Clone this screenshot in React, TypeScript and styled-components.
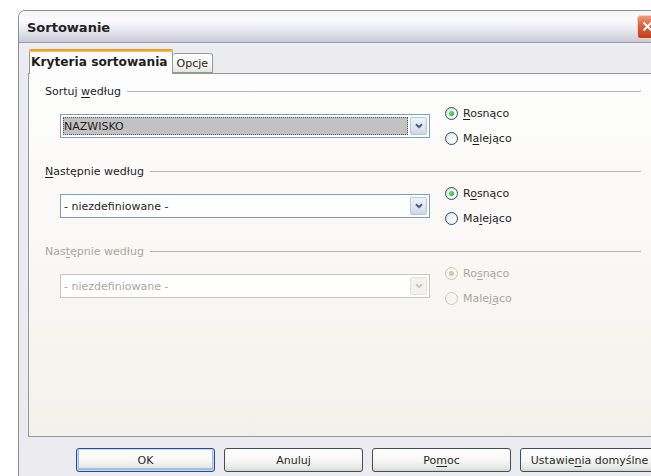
import styled, { createGlobalStyle } from 'styled-components'

const GlobalStyle = createGlobalStyle`
  html, body {
    margin: 0;
    background: #fff;
    overflow: hidden;
  }
  body {
    font-family: "DejaVu Sans", Tahoma, sans-serif;
    font-size: 11px;
    color: #1e1e1e;
  }
`

interface IRadio {
  label: string
  hotkey: number
  checked?: boolean
}
interface IGroup {
  title: string
  hotkey: number
  value: string
  focused?: boolean
  disabled?: boolean
  radios: IRadio[]
}

const groups: IGroup[] = [
  {
    title: 'Sortuj według',
    hotkey: 7,
    value: 'NAZWISKO',
    focused: true,
    radios: [
      { label: 'Rosnąco', hotkey: 0, checked: true },
      { label: 'Malejąco', hotkey: 1 },
    ],
  },
  {
    title: 'Następnie według',
    hotkey: 0,
    value: '- niezdefiniowane -',
    radios: [
      { label: 'Rosnąco', hotkey: 1, checked: true },
      { label: 'Malejąco', hotkey: 2 },
    ],
  },
  {
    title: 'Następnie według',
    hotkey: 3,
    value: '- niezdefiniowane -',
    disabled: true,
    radios: [
      { label: 'Rosnąco', hotkey: 2, checked: true },
      { label: 'Malejąco', hotkey: 5 },
    ],
  },
]

const buttons = [
  { label: 'OK', hotkey: -1, primary: true },
  { label: 'Anuluj', hotkey: -1 },
  { label: 'Pomoc', hotkey: 2 },
  { label: 'Ustawienia domyślne', hotkey: 7 },
]

const Page = styled.div`
  width: 651px;
  height: 476px;
  padding: 10px 0 0 18px;
  box-sizing: border-box;
`

const Window = styled.div`
  width: 642px;
  height: 466px;
  border: 1px solid #8e8e98;
  border-right: none;
  border-bottom: none;
  border-top-left-radius: 7px;
  background: #ecebef;
  display: flex;
  flex-direction: column;
  overflow: hidden;
`

const TitleBar = styled.div`
  height: 31px;
  flex: none;
  display: flex;
  align-items: center;
  padding-left: 8px;
  border-bottom: 1px solid #9c9ca8;
  background: linear-gradient(180deg, #f4f4f8 0%, #fbfbfd 30%, #e6e6ee 65%, #cacad6 100%);
`

const Title = styled.span`
  font-size: 13px;
  font-weight: bold;
  color: #222;
  padding-top: 2px;
`

const CloseButton = styled.div`
  margin-left: auto;
  margin-right: 3px;
  width: 21px;
  height: 24px;
  box-sizing: border-box;
  border: 1px solid #f4d0c4;
  border-radius: 3px;
  background: linear-gradient(180deg, #ec9a7e 0%, #d8603c 45%, #c2401c 100%);
  display: flex;
  align-items: center;
  justify-content: center;
`

const TabStrip = styled.div`
  height: 30px;
  flex: none;
  display: flex;
  align-items: flex-end;
  padding-left: 10px;
`

const Tab = styled.div<{ $active?: boolean }>`
  box-sizing: border-box;
  position: relative;
  z-index: ${(p) => (p.$active ? 2 : 1)};
  height: ${(p) => (p.$active ? '25px' : '20px')};
  margin-bottom: ${(p) => (p.$active ? '-1px' : '0')};
  padding: ${(p) => (p.$active ? '5px 4px 0 1px' : '3px 4px 0')};
  border: 1px solid #919b9c;
  border-bottom: ${(p) => (p.$active ? 'none' : '1px solid #919b9c')};
  border-left: ${(p) => (p.$active ? '1px solid #919b9c' : 'none')};
  border-radius: 3px 3px 0 0;
  background: ${(p) =>
    p.$active ? '#fcfcfe' : 'linear-gradient(180deg, #fefefe 0%, #f2f2ee 70%, #e4e3dc 100%)'};
  font-weight: ${(p) => (p.$active ? 'bold' : 'normal')};
  font-size: ${(p) => (p.$active ? '12.2px' : '11px')};
  white-space: nowrap;
  &::before {
    content: '';
    display: ${(p) => (p.$active ? 'block' : 'none')};
    position: absolute;
    left: -1px;
    right: -1px;
    top: -1px;
    height: 3px;
    border-radius: 3px 3px 0 0;
    background: linear-gradient(180deg, #e68b2c 0%, #ffc73c 100%);
  }
`

const Panel = styled.div`
  height: 364px;
  flex: none;
  box-sizing: border-box;
  margin-left: 9px;
  padding: 9px 20px 0 16px;
  border: 1px solid #919b9c;
  border-right: none;
  background: linear-gradient(180deg, #fdfdfd 0%, #f9f8f5 50%, #f3f1ea 100%);
  display: flex;
  flex-direction: column;
`

const Group = styled.div`
  height: 80px;
  flex: none;
`

const GroupHeader = styled.div<{ $disabled?: boolean }>`
  height: 16px;
  display: flex;
  align-items: center;
  gap: 6px;
  color: ${(p) => (p.$disabled ? '#a8a7a2' : 'inherit')};
`

const Rule = styled.div`
  flex: 1;
  height: 1px;
  background: #b4b4b4;
`

const GroupBody = styled.div`
  display: flex;
`

const Combo = styled.div<{ $disabled?: boolean }>`
  margin: 15px 0 0 15px;
  width: 370px;
  height: 24px;
  box-sizing: border-box;
  border: 1px solid ${(p) => (p.$disabled ? '#c9c7ba' : '#7f9db9')};
  background: #fff;
  display: flex;
  align-items: center;
  padding: 2px;
  gap: 2px;
  color: ${(p) => (p.$disabled ? '#a8a7a2' : 'inherit')};
`

const ComboValue = styled.div<{ $focused?: boolean }>`
  flex: 1;
  height: 100%;
  box-sizing: border-box;
  display: flex;
  align-items: center;
  padding-left: 1px;
  background: ${(p) => (p.$focused ? '#c2c2c2' : 'transparent')};
  outline: ${(p) => (p.$focused ? '1px dotted #555' : 'none')};
  outline-offset: -1px;
`

const ComboArrow = styled.div<{ $disabled?: boolean }>`
  width: 17px;
  height: 18px;
  box-sizing: border-box;
  border: 1px solid ${(p) => (p.$disabled ? '#e2e0d8' : '#b9c6e0')};
  border-radius: 2px;
  background: ${(p) =>
    p.$disabled
      ? '#f3f2ee'
      : 'linear-gradient(180deg, #f0f2f8 0%, #dfe4ee 60%, #cfd6e4 100%)'};
  display: flex;
  align-items: center;
  justify-content: center;
`

const RadioColumn = styled.div`
  margin: 2px 0 0 15px;
  display: flex;
  flex-direction: column;
  gap: 1px;
`

const RadioRow = styled.div<{ $disabled?: boolean }>`
  height: 24px;
  display: flex;
  align-items: center;
  gap: 5px;
  color: ${(p) => (p.$disabled ? '#a8a7a2' : 'inherit')};
`

const RadioCircle = styled.span<{ $checked?: boolean; $disabled?: boolean }>`
  width: 13px;
  height: 13px;
  box-sizing: border-box;
  border-radius: 50%;
  border: 1px solid ${(p) => (p.$disabled ? '#cac8bb' : '#1c5180')};
  background: ${(p) =>
    p.$disabled ? '#f6f5f2' : 'radial-gradient(circle at 65% 65%, #fff 0%, #f2f2ee 50%, #d6d5cd 100%)'};
  display: flex;
  align-items: center;
  justify-content: center;
  &::after {
    content: '';
    display: ${(p) => (p.$checked ? 'block' : 'none')};
    width: 5px;
    height: 5px;
    border-radius: 50%;
    background: ${(p) =>
      p.$disabled ? '#cac8bb' : 'radial-gradient(circle at 35% 35%, #7ee17a 0%, #3fb43c 60%, #21a121 100%)'};
  }
`

const Key = styled.span`
  text-decoration: underline;
  text-underline-offset: 2px;
`

const ButtonRow = styled.div`
  display: flex;
  gap: 9px;
  margin-top: 11px;
  padding-left: 57px;
`

const Button = styled.div<{ $primary?: boolean }>`
  flex: none;
  width: 139px;
  height: 24px;
  box-sizing: border-box;
  border: 1px solid ${(p) => (p.$primary ? '#1f4f8f' : '#3a4f66')};
  border-radius: 3px;
  background: linear-gradient(180deg, #ffffff 0%, #f6f6f4 55%, #e6e5e0 88%, #d6d3ca 100%);
  box-shadow: ${(p) =>
    p.$primary ? 'inset 0 0 0 1px #c7d6f4, inset 0 -1px 0 2px #a3bde8' : 'none'};
  display: flex;
  align-items: center;
  justify-content: center;
  white-space: nowrap;
  font-weight: normal;
  color: #2a2a2a;
`

const Hotkeyed = ({ text, hotkey }: { text: string; hotkey: number }) => {
  if (hotkey < 0) return <>{text}</>
  return (
    <>
      {text.slice(0, hotkey)}
      <Key>{text[hotkey]}</Key>
      {text.slice(hotkey + 1)}
    </>
  )
}

const Chevron = ({ color }: { color: string }) => (
  <svg width="8" height="6" viewBox="0 0 8 6">
    <path d="M1 1.2 L4 4.2 L7 1.2" fill="none" stroke={color} strokeWidth="2" />
  </svg>
)

const SortGroup = ({ title, hotkey, value, focused, disabled, radios }: IGroup) => (
  <Group>
    <GroupHeader $disabled={disabled}>
      <span>
        <Hotkeyed text={title} hotkey={hotkey} />
      </span>
      <Rule />
    </GroupHeader>
    <GroupBody>
      <Combo $disabled={disabled}>
        <ComboValue $focused={focused}>{value}</ComboValue>
        <ComboArrow $disabled={disabled}>
          <Chevron color={disabled ? '#c8c6bc' : '#4b5d7e'} />
        </ComboArrow>
      </Combo>
      <RadioColumn>
        {radios.map((r) => (
          <RadioRow key={r.label} $disabled={disabled}>
            <RadioCircle $checked={r.checked} $disabled={disabled} />
            <span>
              <Hotkeyed text={r.label} hotkey={r.hotkey} />
            </span>
          </RadioRow>
        ))}
      </RadioColumn>
    </GroupBody>
  </Group>
)

const App = () => {
  return (
    <Page>
      <GlobalStyle />
      <Window>
        <TitleBar>
          <Title>Sortowanie</Title>
          <CloseButton>
            <svg width="11" height="11" viewBox="0 0 11 11">
              <path d="M1.5 1.5 L9.5 9.5 M9.5 1.5 L1.5 9.5" stroke="#fff" strokeWidth="2" />
            </svg>
          </CloseButton>
        </TitleBar>
        <TabStrip>
          <Tab $active>Kryteria sortowania</Tab>
          <Tab>Opcje</Tab>
        </TabStrip>
        <Panel>
          {groups.map((g, i) => (
            <SortGroup key={i} {...g} />
          ))}
        </Panel>
        <ButtonRow>
          {buttons.map((b) => (
            <Button key={b.label} $primary={b.primary}>
              <span>
                <Hotkeyed text={b.label} hotkey={b.hotkey} />
              </span>
            </Button>
          ))}
        </ButtonRow>
      </Window>
    </Page>
  )
}

export default App
